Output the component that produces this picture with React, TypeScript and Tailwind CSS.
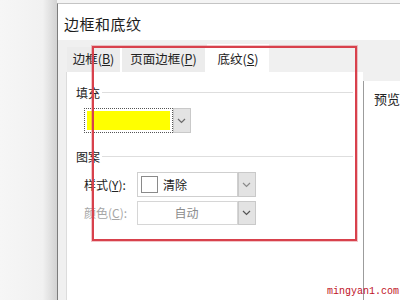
import React from "react";

const cjk = "font-['Microsoft_YaHei','Noto_Sans_CJK_SC',sans-serif]";

function Chevron({ color = "#6b6b6b" }: { color?: string }) {
  return (
    <svg width="9" height="6" viewBox="0 0 9 6">
      <path d="M1 1 L4.5 4.5 L8 1" fill="none" stroke={color} strokeWidth="1.2" />
    </svg>
  );
}

function DropBtn({ h, color }: { h: string; color?: string }) {
  return (
    <div className={`${h} w-[18px] bg-[#e3e3e3] border border-[#c9c9c9] flex items-center justify-center`}>
      <Chevron color={color} />
    </div>
  );
}

export default function App() {
  return (
    <div className={`w-[400px] h-[300px] relative overflow-hidden bg-[#f4f4f4] flex ${cjk}`}>
      {/* desktop / shadow */}
      <div className="w-[58px] h-full bg-gradient-to-r from-[#f6f6f6] via-[#f1f1f1] via-75% to-[#d2d2d2]" />
      {/* window */}
      <div className="flex-1 flex flex-col mt-[3px] border-l border-l-[#7c7c7c] border-t border-t-[#c4c4c4]">
        {/* title bar */}
        <div className="h-[36px] bg-white flex items-center pl-[6px] pt-[3px] shrink-0">
          <span className="text-[15px] leading-none text-[#1c1c1c] tracking-[0.5px]">边框和底纹</span>
        </div>
        {/* client */}
        <div className="flex-1 bg-[#f0f0f0] flex flex-col">
          {/* tab row */}
          <div className="h-[32px] flex items-end pl-[9px] shrink-0">
            <div className="h-[25px] w-[55px] bg-[#ececec] border-r-2 border-white flex items-center justify-center text-[12.5px] text-[#222] leading-none">
              边框(<span className="underline">B</span>)
            </div>
            <div className="h-[25px] w-[85px] bg-[#ececec] border-r-2 border-white flex items-center justify-center text-[12.5px] text-[#222] leading-none">
              页面边框(<span className="underline">P</span>)
            </div>
            <div className="h-[28px] w-[62px] bg-white flex items-center justify-center text-[12.5px] text-[#222] leading-none pt-[2px]">
              底纹(<span className="underline">S</span>)
            </div>
          </div>
          {/* panel */}
          <div className="flex-1 ml-[8px] border-l border-[#dcdcdc] bg-white flex">
            {/* left column */}
            <div className="w-[296px] flex flex-col">
              {/* 填充 */}
              <div className="flex items-center pt-[14px] pl-[9px] pr-[10px]">
                <span className="text-[12px] leading-[13px] text-[#222]">填充</span>
                <div className="flex-1 h-px bg-[#dedede] ml-[2px]" />
              </div>
              <div className="flex mt-[9px] ml-[17px]">
                <div className="h-[25px] w-[89px] border border-dotted border-[#555] p-[2px] bg-white">
                  <div className="w-full h-full bg-[#ffff00]" />
                </div>
                <DropBtn h="h-[25px]" />
              </div>
              {/* 图案 */}
              <div className="flex items-center mt-[17px] pl-[9px] pr-[10px]">
                <span className="text-[12px] leading-[13px] text-[#222]">图案</span>
                <div className="flex-1 h-px bg-[#dedede] ml-[2px]" />
              </div>
              <div className="flex items-center mt-[9px] ml-[17px]">
                <span className="w-[53px] text-[12px] leading-none text-[#222]">
                  样式(<span className="underline">Y</span>):
                </span>
                <div className="h-[25px] w-[101px] border border-[#cfcfcf] bg-white flex items-center pl-[3px]">
                  <div className="w-[17px] h-[17px] border border-[#8a8a8a] bg-white" />
                  <span className="ml-[5px] text-[12px] leading-none text-[#222]">清除</span>
                </div>
                <DropBtn h="h-[25px]" color="#8a8a8a" />
              </div>
              <div className="flex items-center mt-[4px] ml-[17px]">
                <span className="w-[53px] text-[12px] leading-none text-[#a6a6a6]">
                  颜色(<span className="underline">C</span>):
                </span>
                <div className="h-[24px] w-[101px] border border-[#d6d6d6] bg-white flex items-center justify-center">
                  <span className="text-[12px] leading-none text-[#8c8c8c] pr-[2px]">自动</span>
                </div>
                <DropBtn h="h-[24px]" color="#555" />
              </div>
            </div>
            {/* right column */}
            <div className="flex-1 flex flex-col">
              <div className="h-[9px] bg-[#f0f0f0]" />
              <div className="flex-1 border-l border-[#9c9c9c] pl-[10px] pt-[4px]">
                <span className="text-[13px] leading-none text-[#222] whitespace-nowrap">预览</span>
              </div>
            </div>
          </div>
        </div>
      </div>

      {/* red highlight rectangle */}
      <div className="absolute left-[92px] top-[46px] w-[265px] h-[195px] border-[2px] border-[#d8414c] shadow-[0_0_0_1px_rgba(220,90,100,0.35)]" />

      {/* watermark */}
      <div className="absolute right-[1px] bottom-[3px] font-['Liberation_Mono',monospace] text-[10px] leading-none text-[#c0121f]">
        mingyan1.com
      </div>
    </div>
  );
}
